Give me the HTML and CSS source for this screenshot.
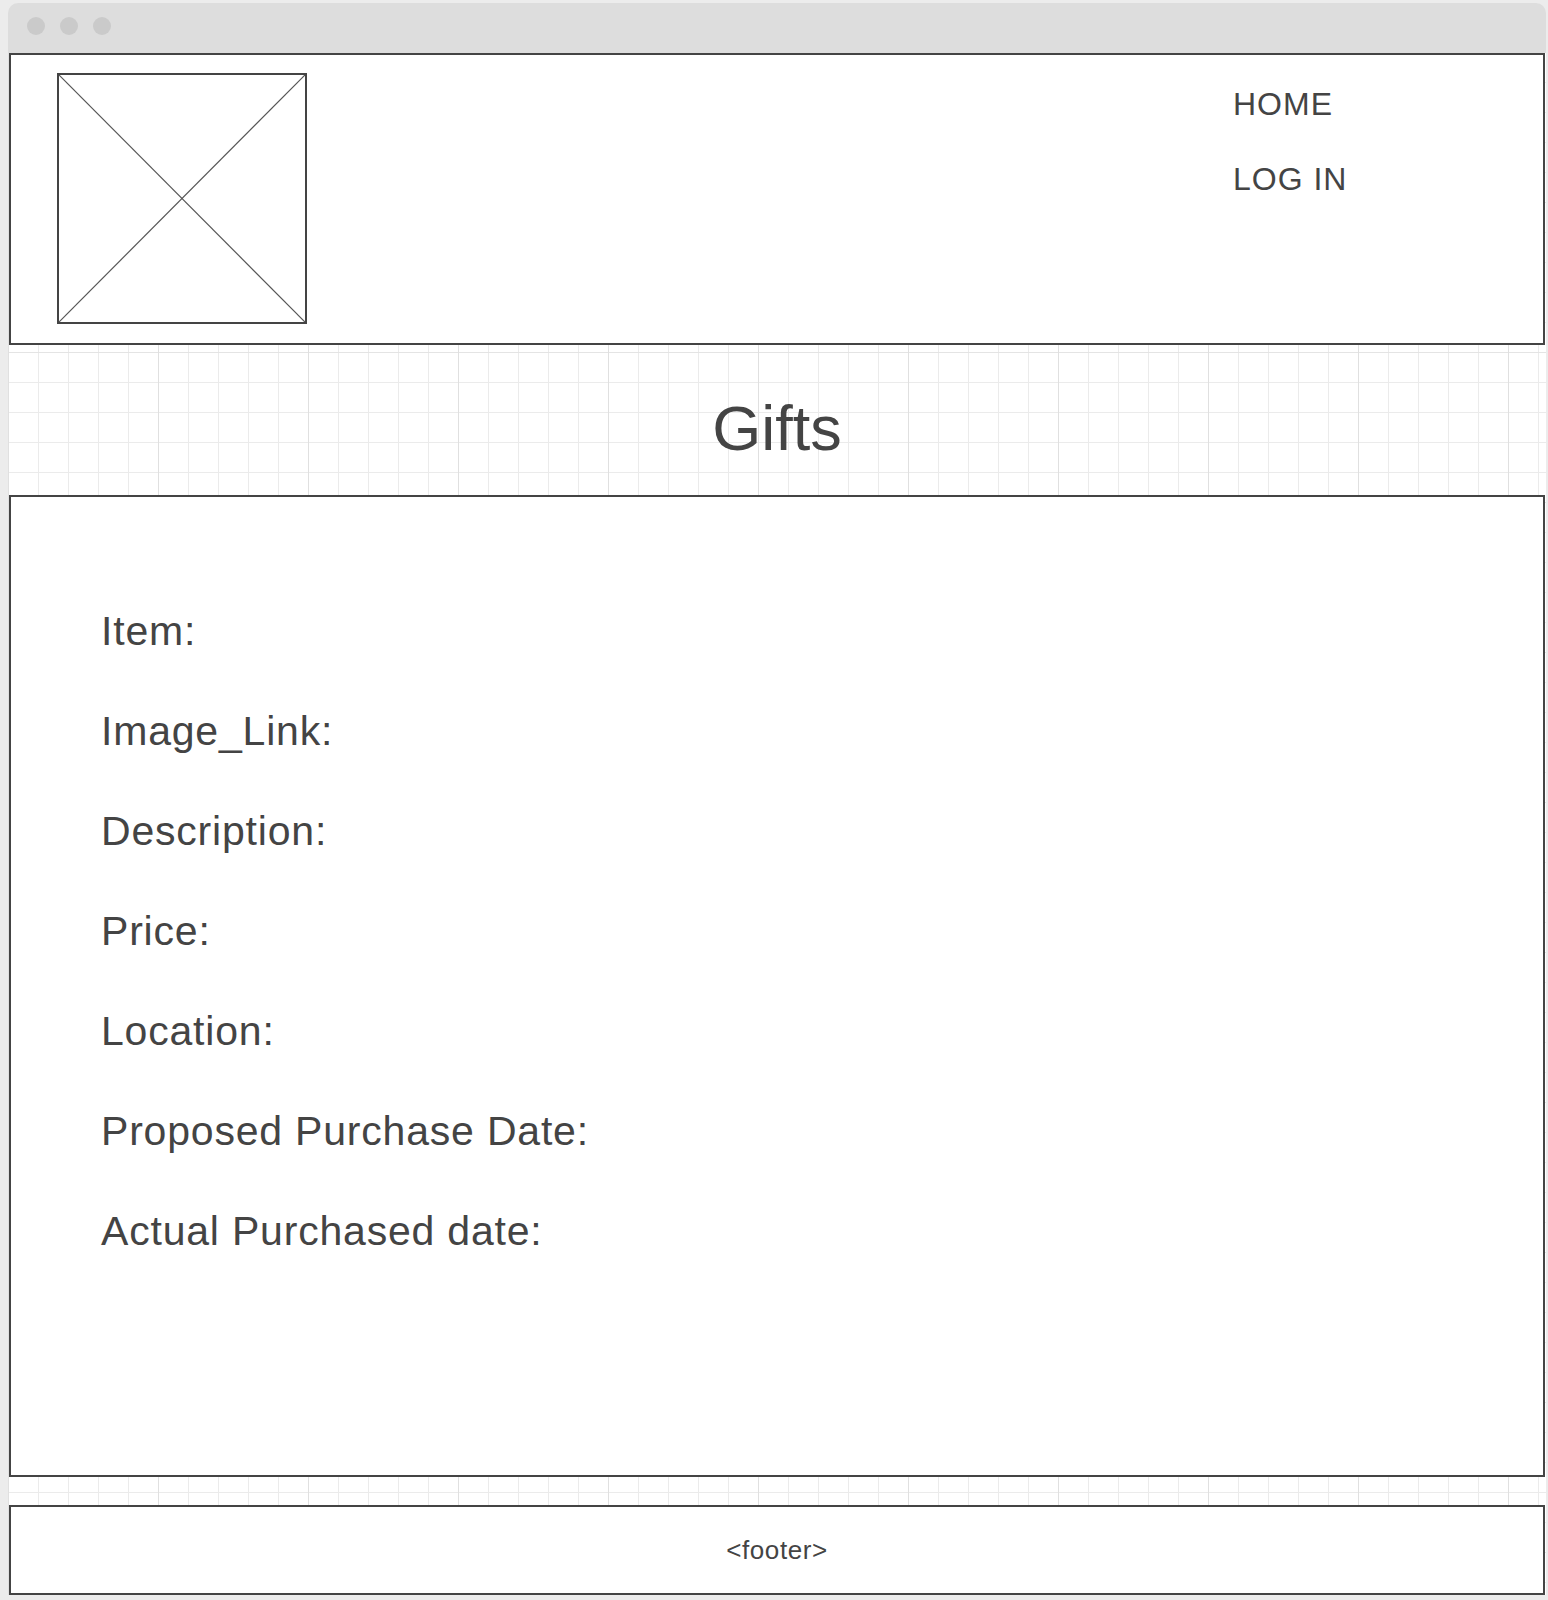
FILE: index.html
```html
<!DOCTYPE html>
<html lang="en">
<head>
    <meta charset="UTF-8">
    <title>Gifts</title>
    <link rel="stylesheet" href="styles.css">
</head>
<body>
<div class="window">
    <div class="titlebar">
        <span class="dot"></span>
        <span class="dot"></span>
        <span class="dot"></span>
    </div>
    <div class="canvas">
        <div class="header">
            <div class="logo">
                <svg viewBox="0 0 100 100" preserveAspectRatio="none">
                    <line x1="0" y1="0" x2="100" y2="100" vector-effect="non-scaling-stroke"/>
                    <line x1="100" y1="0" x2="0" y2="100" vector-effect="non-scaling-stroke"/>
                </svg>
            </div>
            <ul class="nav">
                <li><a href="#">HOME</a></li>
                <li><a href="#">LOG IN</a></li>
            </ul>
        </div>
        <h1 class="title">Gifts</h1>
        <div class="main">
            <ul class="fields">
                <li>Item:</li>
                <li>Image_Link:</li>
                <li>Description:</li>
                <li>Price:</li>
                <li>Location:</li>
                <li>Proposed Purchase Date:</li>
                <li>Actual Purchased date:</li>
            </ul>
        </div>
        <div class="footer">&lt;footer&gt;</div>
    </div>
</div>
</body>
</html>
```

FILE: styles.css
```css
*{
    margin: 0;
    padding: 0;
    list-style: none;
    box-sizing: border-box;
}
body{
    background: #ececec;
    font-family: "Liberation Sans", Arial, sans-serif;
    color: #444444;
}
.window{
    width: 1538px;
    margin: 3px 0 0 8px;
}
.titlebar{
    height: 50px;
    background: #dddddd;
    border-radius: 10px 10px 0 0;
    padding: 14px 0 0 19px;
    display: flex;
    gap: 15px;
}
.dot{
    width: 18px;
    height: 18px;
    border-radius: 50%;
    background: #cacaca;
}
.canvas{
    padding: 0 1px;
    background-color: #ffffff;
    background-image:
        linear-gradient(to right, #e0e0e0 1px, transparent 1px),
        linear-gradient(to bottom, #e4e4e4 1px, transparent 1px),
        linear-gradient(to right, #ebebeb 1px, transparent 1px),
        linear-gradient(to bottom, #ebebeb 1px, transparent 1px);
    background-size: 150px 150px, 150px 150px, 30px 30px, 30px 30px;
    background-position: 0 0, 0 149px, 0 0, 0 29px;
}
.header{
    height: 292px;
    border: 2px solid #444444;
    background: #ffffff;
    display: flex;
    align-items: flex-start;
    padding: 18px 0 0 46px;
}
.logo{
    width: 250px;
    height: 251px;
    border: 2px solid #444444;
}
.logo svg{
    display: block;
    width: 100%;
    height: 100%;
}
.logo line{
    stroke: #555555;
    stroke-width: 1.2;
}
.nav{
    margin-left: auto;
    width: 310px;
    display: flex;
    flex-direction: column;
    gap: 13px;
}
.nav a{
    display: block;
    font-size: 32px;
    line-height: 62px;
    letter-spacing: 1px;
    color: #444444;
    text-decoration: none;
}
.title{
    height: 150px;
    padding-top: 16px;
    font-size: 63px;
    font-weight: normal;
    line-height: 134px;
    text-align: center;
}
.main{
    height: 982px;
    border: 2px solid #444444;
    background: #ffffff;
    padding: 84px 0 0 90px;
}
.fields li{
    font-size: 41px;
    line-height: 100px;
    letter-spacing: 0.8px;
}
.footer{
    height: 90px;
    margin-top: 28px;
    border: 2px solid #444444;
    background: #ffffff;
    font-size: 26px;
    line-height: 86px;
    letter-spacing: 0.6px;
    text-align: center;
}
```
